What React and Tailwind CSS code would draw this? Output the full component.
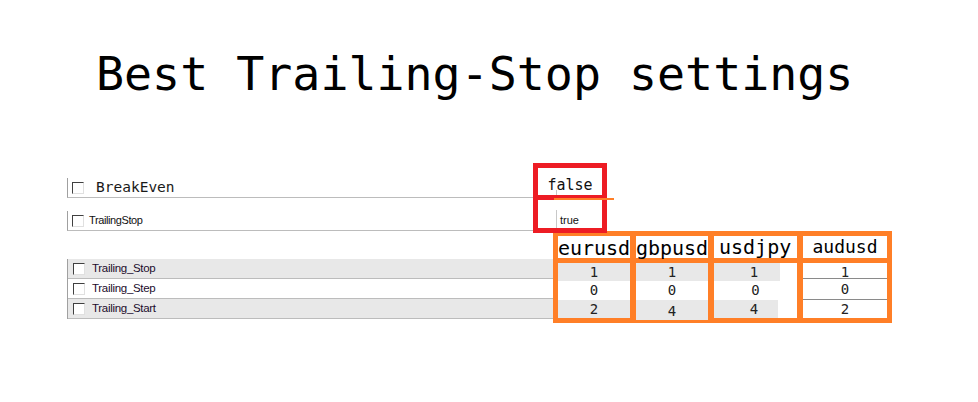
import React from "react";

function Checkbox() {
  return (
    <span className="block w-[12px] h-[12px] shrink-0 bg-white border border-t-[#404040] border-l-[#404040] border-r-[#e0e0e0] border-b-[#e0e0e0]" />
  );
}

function GridRow({ label, grey }) {
  return (
    <div
      className={`h-[20px] flex items-center pl-[5px] border-b border-b-[#bcbcbc] ${grey ? "bg-[#e8e8e8]" : "bg-white"}`}
    >
      <Checkbox />
      <span className="ml-[7px] text-[11.5px] tracking-[-0.3px] text-[#1c0c2c] font-['Liberation_Sans',Arial,sans-serif]">
        {label}
      </span>
    </div>
  );
}

const mono = "font-['DejaVu_Sans_Mono','Liberation_Mono',monospace]";

function Digit({ children, cls = "" }) {
  return (
    <span className={`${mono} text-[14px] leading-[18px] text-[#222] ${cls}`}>{children}</span>
  );
}

export default function App() {
  return (
    <div className="w-[978px] h-[402px] bg-white overflow-hidden">
      {/* Title */}
      <div className="h-[163px] pt-[51px] pl-[96px]">
        <h1 className={`${mono} text-[46.6px] leading-[46px] text-black font-normal whitespace-nowrap`}>
          Best Trailing-Stop settings
        </h1>
      </div>

      {/* Section 1: BreakEven / TrailingStop */}
      <div className="flex h-[68px]">
        <div className="ml-[67px] w-[466px] pt-[15px]">
          <div className="h-[20px] flex items-center pl-[4px] border-l border-l-[#a0a0a0] border-b border-b-[#bcbcbc]">
            <Checkbox />
            <span className={`ml-[12px] ${mono} text-[14.5px] text-[#1a1a1a]`}>BreakEven</span>
          </div>
          <div className="mt-[13px] h-[20px] flex items-center pl-[4px] border-l border-l-[#a0a0a0] border-b border-b-[#bcbcbc]">
            <Checkbox />
            <span className="ml-[5px] text-[11px] tracking-[-0.4px] text-[#111] font-['Liberation_Sans',Arial,sans-serif]">
              TrailingStop
            </span>
          </div>
        </div>
        <div className="relative z-10 w-[74px]">
          <div className="w-[74px] h-[70px] border-[5px] border-[#ed1c24] bg-white flex flex-col">
            <div className="relative h-[27px] flex justify-center pt-[8px]">
              <span className={`${mono} text-[15px] leading-[18px] text-[#111]`}>false</span>
              <span className="absolute left-[18px] bottom-0 w-px h-[5px] bg-[#c8c8c8]" />
            </div>
            <div className="h-[5px] bg-[#ed1c24]" />
            <div className="flex-1 flex pt-[10px]">
              <div className="ml-[18px] border-l border-l-[#c8c8c8] pl-[3px] flex items-center">
                <span className="text-[11px] leading-[14px] text-[#111] font-['Liberation_Sans',Arial,sans-serif] pt-[2px]">
                  true
                </span>
              </div>
            </div>
          </div>
          <div className="absolute left-[21px] top-[35px] w-[60px] h-[1.5px] bg-[#ff7f27]" />
        </div>
      </div>

      {/* Section 2: pairs table */}
      <div className="flex">
        <div className="ml-[67px] w-[486px] pt-[28px]">
          <div className="border-l border-l-[#a0a0a0]">
            <GridRow label="Trailing_Stop" grey />
            <GridRow label="Trailing_Step" />
            <GridRow label="Trailing_Start" grey />
          </div>
        </div>

        <div className="w-[339px] h-[92px] bg-[#ff7f27] p-[5px] flex gap-[6px]">
          {/* eurusd */}
          <div className="w-[72px] flex flex-col gap-[5px]">
            <div className="h-[22px] bg-white flex justify-center">
              <span className={`${mono} text-[20px] leading-[24px] text-black`}>eurusd</span>
            </div>
            <div className="flex-1 flex flex-col">
              <div className="h-[18px] bg-[#e8e8e8] flex justify-center"><Digit>1</Digit></div>
              <div className="h-[19px] bg-white flex justify-center"><Digit>0</Digit></div>
              <div className="flex-1 bg-[#e8e8e8] flex justify-center"><Digit>2</Digit></div>
            </div>
          </div>
          {/* gbpusd */}
          <div className="w-[72px] flex flex-col gap-[5px]">
            <div className="h-[22px] bg-white flex justify-center">
              <span className={`${mono} text-[20px] leading-[24px] text-black`}>gbpusd</span>
            </div>
            <div className="flex-1 flex flex-col">
              <div className="h-[18px] bg-[#e8e8e8] flex justify-center"><Digit>1</Digit></div>
              <div className="h-[19px] bg-white flex justify-center"><Digit>0</Digit></div>
              <div className="flex-1 bg-[#e8e8e8] flex justify-center"><Digit cls="pt-[2px]">4</Digit></div>
            </div>
          </div>
          {/* usdjpy */}
          <div className="w-[83px] flex flex-col gap-[5px]">
            <div className="h-[22px] bg-white pl-[5px]">
              <span className={`${mono} text-[20px] leading-[20px] text-black`}>usdjpy</span>
            </div>
            <div className="flex-1 flex flex-col">
              <div className="h-[18px] flex">
                <div className="flex-1 bg-[#e8e8e8] flex justify-center pl-[14px]"><Digit>1</Digit></div>
                <div className="w-[17px] bg-white" />
              </div>
              <div className="h-[19px] bg-white flex justify-center"><Digit>0</Digit></div>
              <div className="flex-1 flex">
                <div className="flex-1 bg-[#e8e8e8] flex justify-center pl-[16px]"><Digit cls="leading-[15px]">4</Digit></div>
                <div className="w-[19px] bg-white" />
              </div>
            </div>
          </div>
          {/* audusd */}
          <div className="w-[84px] flex flex-col gap-[5px]">
            <div className="h-[22px] bg-white flex justify-center">
              <span className={`${mono} text-[18px] leading-[22px] text-black`}>audusd</span>
            </div>
            <div className="flex-1 flex flex-col bg-white">
              <div className="h-[16px] border-b border-b-[#8a8a8a] flex justify-center">
                <Digit cls="leading-[16px] text-[#4a1040]">1</Digit>
              </div>
              <div className="h-[21px] border-b border-b-[#8a8a8a] flex justify-center">
                <Digit cls="leading-[20px]">0</Digit>
              </div>
              <div className="flex-1 flex justify-center">
                <Digit>2</Digit>
              </div>
            </div>
          </div>
        </div>
      </div>
    </div>
  );
}
